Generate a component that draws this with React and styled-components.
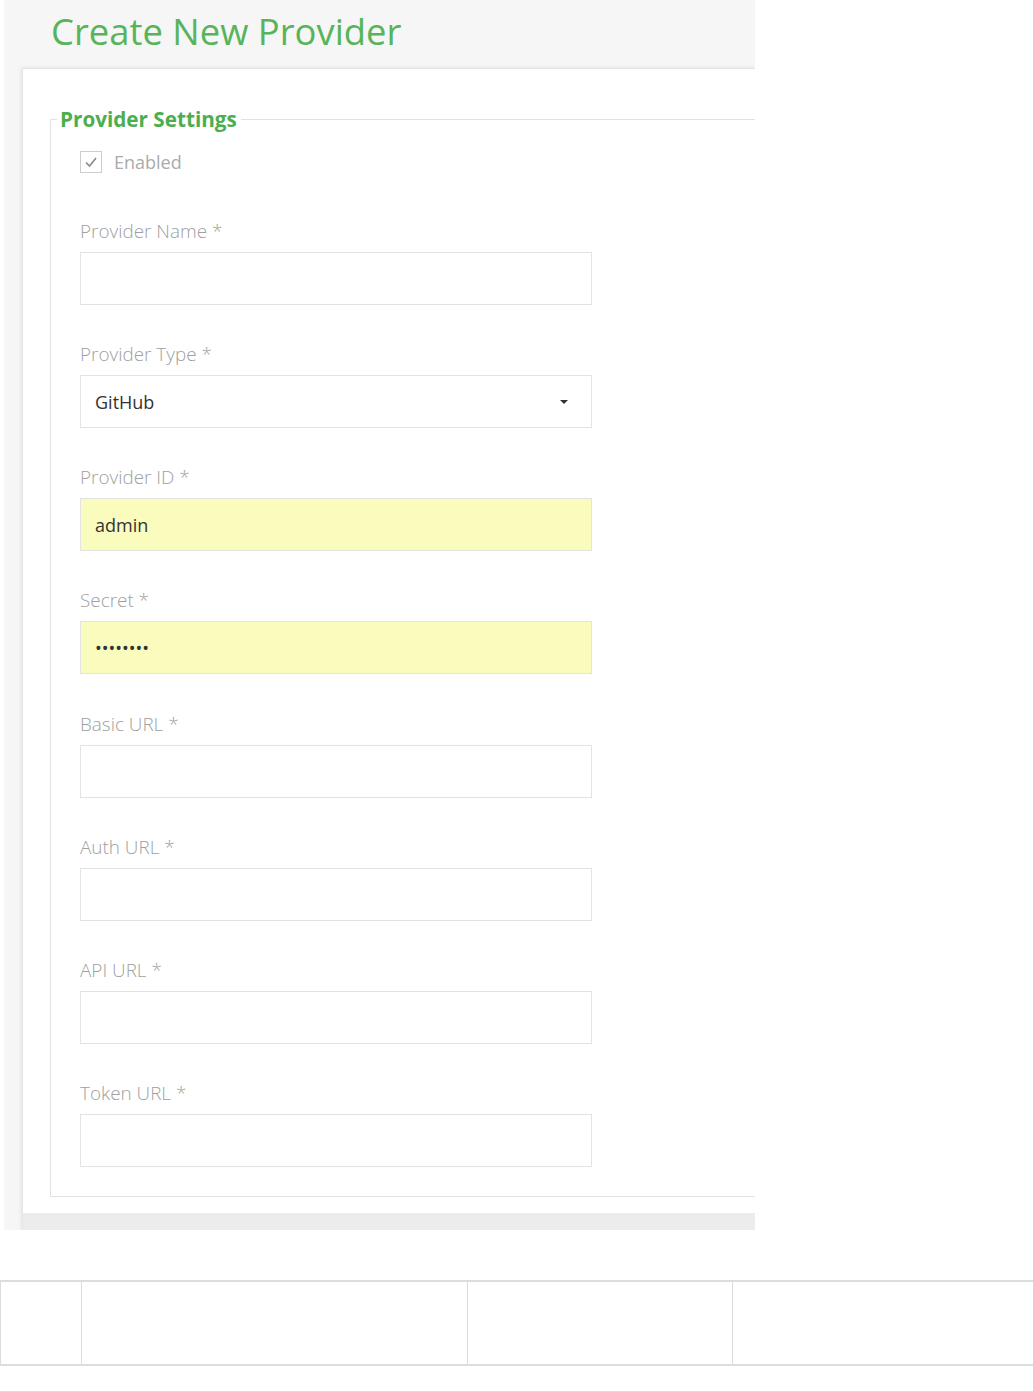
import React from "react";
import styled, { createGlobalStyle } from "styled-components";

const Global = createGlobalStyle`
  html, body { margin: 0; padding: 0; background: #ffffff; overflow: hidden; }
  body { font-family: "Open Sans", "Liberation Sans", sans-serif; }
  * { box-sizing: border-box; }
`;

const Page = styled.div`
  width: 1033px;
  height: 1392px;
  display: flex;
  flex-direction: column;
`;

const Panel = styled.section`
  margin-left: 4px;
  width: 751px;
  height: 1231px;
  background: #f6f6f6;
  display: flex;
  flex-direction: column;
  overflow: hidden;
`;

const Header = styled.header`
  height: 68px;
  flex: none;
  padding-left: 47px;
  padding-top: 11px;
`;

const Title = styled.h1`
  margin: 0;
  font-family: "Open Sans", sans-serif;
  font-weight: 400;
  font-size: 36.4px;
  line-height: 40px;
  color: #58b45a;
`;

const Card = styled.div`
  margin-left: 18px;
  flex: 1;
  background: #ffffff;
  border-top: 1px solid #e4e4e4;
  border-left: 1px solid #e6e6e6;
  box-shadow: -2px 0 3px rgba(0, 0, 0, 0.04), 0 -2px 3px rgba(0, 0, 0, 0.03);
  display: flex;
  flex-direction: column;
`;

const CardBody = styled.div`
  flex: 1;
  padding: 38px 0 16px 27px;
`;

const CardFooter = styled.div`
  height: 18px;
  background: #ececec;
  flex: none;
`;

const Fieldset = styled.fieldset`
  margin: 0;
  padding: 0 0 29px 0;
  border: 1px solid #e2e2e2;
  border-right: none;
  min-width: 0;
`;

const Legend = styled.legend`
  margin-left: 6px;
  padding: 0 4px 0 3px;
  font-family: "Open Sans", sans-serif;
  font-weight: 700;
  font-size: 20.7px;
  line-height: 24px;
  color: #4cae4f;
`;

const Content = styled.div`
  padding: 20px 0 0 29px;
  display: flex;
  flex-direction: column;
`;

const CheckRow = styled.label`
  display: flex;
  align-items: center;
  gap: 12px;
  height: 22px;
  margin-bottom: 46px;
  font-size: 18px;
  color: #ababab;
`;

const CheckBox = styled.span`
  width: 22px;
  height: 22px;
  border: 1px solid #cdcdcd;
  background: #fff;
  display: flex;
  align-items: center;
  justify-content: center;
`;

const Field = styled.div`
  display: flex;
  flex-direction: column;
  gap: 9px;
  margin-bottom: 37.15px;
  &:last-child { margin-bottom: 0; }
`;

const Label = styled.label`
  font-size: 18.9px;
  line-height: 24px;
  font-weight: 300;
  color: #a0a0a0;
`;

const Input = styled.input`
  width: 512px;
  height: 53px;
  border: 1px solid #e3e3e3;
  background: ${(p) => (p.$autofill ? "#f9fcbd" : "#ffffff")};
  padding: 0 14px;
  font-family: "Open Sans", sans-serif;
  font-size: 18px;
  color: #333;
  outline: none;
  box-shadow: 0 0 1px rgba(0,0,0,0.03);
`;

const Select = styled.div`
  width: 512px;
  height: 53px;
  border: 1px solid #e3e3e3;
  background: #fff;
  padding: 0 23px 0 14px;
  display: flex;
  align-items: center;
  justify-content: space-between;
  font-size: 18px;
  color: #333;
`;

const Caret = styled.span`
  width: 0;
  height: 0;
  border-left: 4px solid transparent;
  border-right: 4px solid transparent;
  border-top: 4px solid #333;
`;

const Table = styled.table`
  margin-top: 50px;
  width: 1040px;
  border-collapse: collapse;
  table-layout: fixed;
`;

const Cell = styled.td`
  height: 84px;
  border-top: 2px solid #dddddd;
  border-bottom: 2px solid #dddddd;
  border-left: 1px solid #dddddd;
  padding: 0;
`;

const Rule = styled.div`
  margin-top: 25px;
  height: 1px;
  background: #dddddd;
`;

const fields = [
  { label: "Provider Name *" },
  { label: "Provider Type *", select: "GitHub" },
  { label: "Provider ID *", value: "admin", autofill: true },
  { label: "Secret *", value: "12345678", autofill: true, type: "password" },
  { label: "Basic URL *" },
  { label: "Auth URL *" },
  { label: "API URL *" },
  { label: "Token URL *" },
];

export default function App() {
  return (
    <Page>
      <Global />
      <Panel>
        <Header>
          <Title>Create New Provider</Title>
        </Header>
        <Card>
          <CardBody>
            <Fieldset>
              <Legend>Provider Settings</Legend>
              <Content>
                <CheckRow>
                  <CheckBox>
                    <svg width="14" height="12" viewBox="0 0 14 12">
                      <path d="M2 6.5 L5.5 10 L12 2" fill="none" stroke="#8a8a8a" strokeWidth="1.6" />
                    </svg>
                  </CheckBox>
                  Enabled
                </CheckRow>
                {fields.map((f) => (
                  <Field key={f.label}>
                    <Label>{f.label}</Label>
                    {f.select ? (
                      <Select>
                        {f.select}
                        <Caret />
                      </Select>
                    ) : (
                      <Input
                        type={f.type || "text"}
                        readOnly
                        defaultValue={f.value || ""}
                        $autofill={f.autofill}
                      />
                    )}
                  </Field>
                ))}
              </Content>
            </Fieldset>
          </CardBody>
          <CardFooter />
        </Card>
      </Panel>
      <Table>
        <colgroup>
          <col style={{ width: 81 }} />
          <col style={{ width: 386 }} />
          <col style={{ width: 265 }} />
          <col />
        </colgroup>
        <tbody>
          <tr>
            <Cell />
            <Cell />
            <Cell />
            <Cell />
          </tr>
        </tbody>
      </Table>
      <Rule />
    </Page>
  );
}
